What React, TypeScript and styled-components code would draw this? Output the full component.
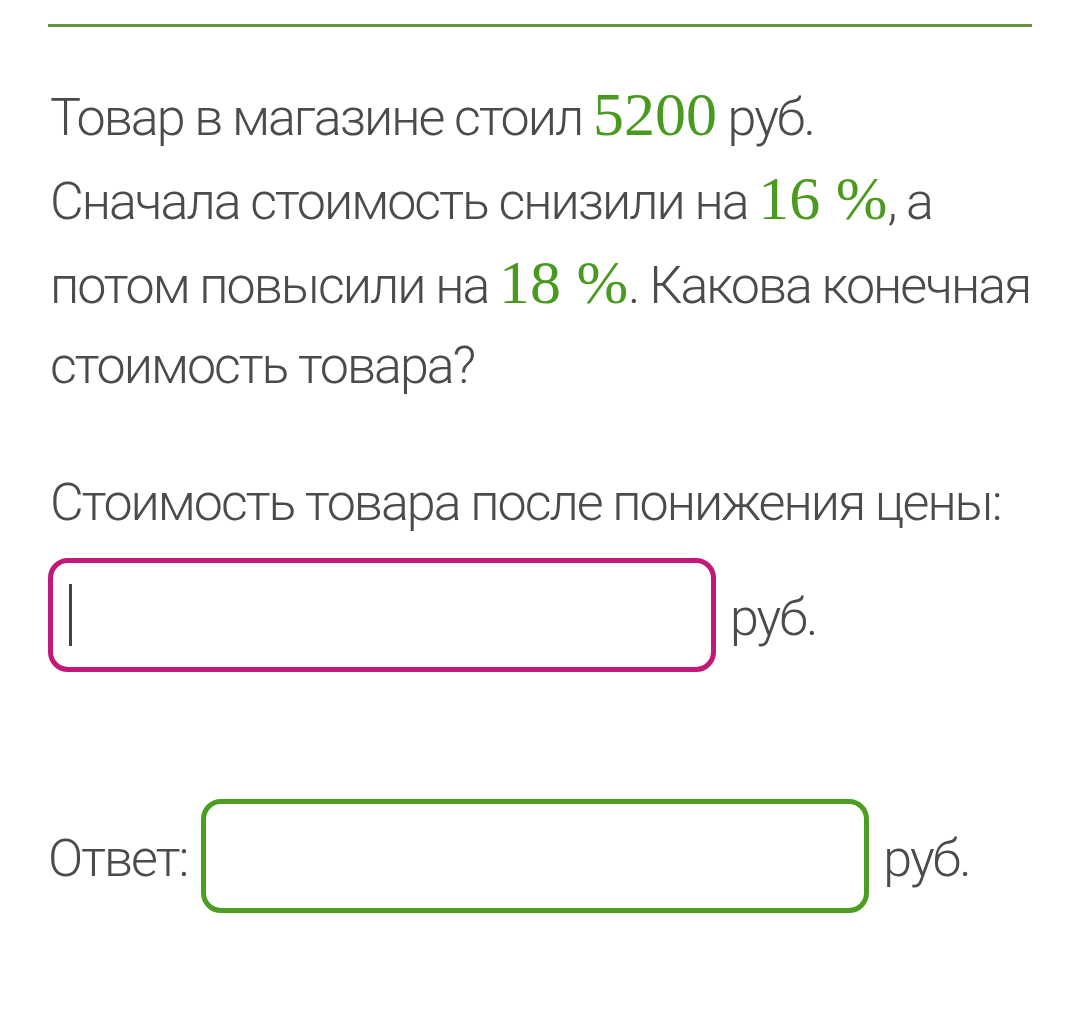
import React from 'react'
import styled, { createGlobalStyle } from 'styled-components'

const GlobalStyle = createGlobalStyle`
  body {
    margin: 0;
    background: #ffffff;
    font-family: Roboto, "Noto Sans", sans-serif;
    font-weight: 300;
    color: #4b4b49;
  }
`

const Page = styled.div`
  width: 984px;
  padding: 24px 0 0 48px;
`

const Divider = styled.hr`
  margin: 0;
  border: none;
  height: 3px;
  background: #66913c;
`

const Text = styled.p`
  margin: 0;
  font-size: 52px;
  line-height: 80px;
  letter-spacing: -2px;
  padding-left: 2px;
`

const Problem = styled(Text)`
  margin-top: 47px;
  width: 1000px;
`

// green serif numbers, as the formula renderer draws them
const Num = styled.span`
  font-family: "Liberation Serif", "DejaVu Serif", serif;
  font-weight: 400;
  font-size: 62px;
  letter-spacing: 0;
  color: #4b9a20;
`

const Label = styled(Text)`
  margin-top: 57px;
`

const Row = styled.div<{ $top: number }>`
  display: flex;
  align-items: center;
  gap: 14px;
  margin-top: ${p => p.$top}px;
`

const Field = styled.div<{ $color: string }>`
  box-sizing: border-box;
  width: 668px;
  height: 114px;
  border: 5px solid ${p => p.$color};
  border-radius: 20px;
  display: flex;
  align-items: center;
  padding-left: 16px;
`

const Caret = styled.div`
  width: 3px;
  height: 62px;
  background: #45453f;
`

const Unit = styled.span`
  font-size: 52px;
  letter-spacing: -2px;
  line-height: 60px;
  padding-top: 6px;
`

const App = () => (
  <React.Fragment>
    <GlobalStyle />
    <Page>
      <Divider />
      <Problem>
        Товар в магазине стоил <Num>5200</Num> руб.
        <br />
        Сначала стоимость снизили на <Num>16 %</Num>, а потом повысили на <Num>18 %</Num>. Какова
        конечная стоимость товара?
      </Problem>
      <Label>Стоимость товара после понижения цены:</Label>
      <Row $top={15}>
        <Field $color="#c2187a">
          <Caret />
        </Field>
        <Unit>руб.</Unit>
      </Row>
      <Row $top={127}>
        <Unit>Ответ:</Unit>
        <Field $color="#4c9e22" />
        <Unit>руб.</Unit>
      </Row>
    </Page>
  </React.Fragment>
)

export default App
